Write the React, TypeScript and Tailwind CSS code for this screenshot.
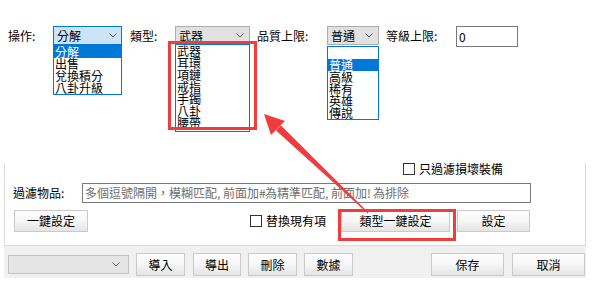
import React from "react";

function Chevron() {
  return (
    <svg width="8" height="5" viewBox="0 0 8 5" className="shrink-0">
      <polyline points="0.5,0.5 4,4 7.5,0.5" fill="none" stroke="#5a5a5a" strokeWidth="1" />
    </svg>
  );
}

function Btn({ cls, children }: { cls: string; children: React.ReactNode }) {
  return (
    <div
      className={
        "flex items-center justify-center border border-[#cacaca] bg-linear-to-b from-[#fefefe] via-[#f6f6f6] to-[#e4e4e4] text-black " +
        cls
      }
    >
      {children}
    </div>
  );
}

function Check() {
  return <div className="w-[12px] h-[12px] border border-[#333333] bg-white shrink-0" />;
}

function Item({ children, sel }: { children?: React.ReactNode; sel?: boolean }) {
  return (
    <div
      className={
        sel
          ? "h-[12px] leading-[12px] pl-[1px] bg-[#0078d7] text-white whitespace-nowrap"
          : "h-[12px] leading-[12px] pl-[1px] text-black whitespace-nowrap"
      }
    >
      {children}
    </div>
  );
}

function A({ c }: { c: string }) {
  return <span className="inline-block w-[6px]">{c}</span>;
}

export default function App() {
  return (
    <div className="relative w-[598px] h-[285px] bg-white overflow-hidden text-[12px] leading-[14px] text-black font-['Noto_Sans_CJK_TC','Noto_Sans_CJK_SC',sans-serif]">
      {/* top row */}
      <div className="flex items-start h-[20px] mt-[26px]">
        <div className="ml-[8px] w-[45px] h-[19px] flex items-center">操作:</div>
        <div className="relative w-[69px] h-[19px]">
          <div className="h-[19px] flex items-center justify-between pl-[3px] pr-[4px] bg-[#cce4f7] border border-[#0078d7]">
            <span>分解</span>
            <Chevron />
          </div>
          <div className="absolute left-0 top-[19px] w-[69px] h-[50px] border border-[#0078d7] bg-white z-10">
            <Item sel>分解</Item>
            <Item>出售</Item>
            <Item>兌換積分</Item>
            <Item>八卦升級</Item>
          </div>
        </div>

        <div className="ml-[8px] w-[45px] h-[19px] flex items-center">類型:</div>
        <div className="relative w-[75px] h-[19px]">
          <div className="h-[19px] flex items-center justify-between pl-[3px] pr-[5px] bg-[#e1e1e1] border border-[#adadad]">
            <span>武器</span>
            <Chevron />
          </div>
          <div className="absolute left-0 top-[18px] w-[75px] h-[88px] border border-[#0078d7] bg-white overflow-hidden z-10">
            <Item>武器</Item>
            <Item>耳環</Item>
            <Item>項鏈</Item>
            <Item>戒指</Item>
            <Item>手鐲</Item>
            <Item>八卦</Item>
            <Item>腰帶</Item>
          </div>
        </div>

        <div className="ml-[7px] w-[70px] h-[19px] flex items-center">品質上限:</div>
        <div className="relative w-[52px] h-[19px]">
          <div className="h-[19px] flex items-center justify-between pl-[3px] pr-[5px] bg-[#e1e1e1] border border-[#adadad]">
            <span>普通</span>
            <Chevron />
          </div>
          <div className="absolute left-0 top-[20px] w-[52px] h-[74px] border border-[#0078d7] bg-white z-10">
            <Item />
            <Item sel>普通</Item>
            <Item>高級</Item>
            <Item>稀有</Item>
            <Item>英雄</Item>
            <Item>傳說</Item>
          </div>
        </div>

        <div className="ml-[7px] w-[70px] h-[19px] flex items-center">等級上限:</div>
        <div className="w-[62px] h-[21px] border border-[#7a7a7a] bg-white flex items-center pl-[2px]">0</div>
      </div>

      {/* group panel */}
      <div className="ml-[4px] mt-[117px] w-[582px] h-[83px] border-x border-b border-[#dadada] bg-white">
        <div className="mt-[4px] h-[12px] flex items-center pl-[398px]">
          <Check />
          <span className="ml-[4px] whitespace-nowrap">只過濾損壞裝備</span>
        </div>
        <div className="mt-[8px] h-[20px] flex items-center">
          <div className="ml-[8px] w-[69px]">過濾物品:</div>
          <div className="w-[449px] h-[20px] border border-[#7a7a7a] flex items-center pl-[2px] text-[#6d6d6d] whitespace-nowrap overflow-hidden">
            <span>
              多個逗號隔開，模糊匹配<A c="," />前面加<A c="#" />為精準匹配<A c="," />前面加<A c="!" />為排除
            </span>
          </div>
        </div>
        <div className="mt-[7px] h-[22px] flex items-center">
          <Btn cls="ml-[9px] w-[74px] h-[22px]">一鍵設定</Btn>
          <div className="ml-[162px] w-[76px] flex items-center">
            <Check />
            <span className="ml-[4px] whitespace-nowrap">替換現有項</span>
          </div>
          <Btn cls="ml-[15px] w-[109px] h-[22px]">類型一鍵設定</Btn>
          <Btn cls="ml-[7px] w-[73px] h-[22px]">設定</Btn>
        </div>
      </div>

      {/* bottom bar */}
      <div className="ml-[4px] w-[582px] h-[32px] bg-[#f0f0f0] flex items-start pt-[7px] pl-[4px]">
        <div className="mt-[2px] w-[121px] h-[19px] bg-[#e5e5e5] border border-[#c3c3c3] flex items-center justify-end pr-[8px]">
          <Chevron />
        </div>
        <Btn cls="ml-[7px] w-[49px] h-[23px]">導入</Btn>
        <Btn cls="ml-[8px] w-[48px] h-[23px]">導出</Btn>
        <Btn cls="ml-[7px] w-[49px] h-[23px]">刪除</Btn>
        <Btn cls="ml-[7px] w-[49px] h-[23px]">數據</Btn>
        <Btn cls="ml-[78px] w-[73px] h-[23px]">保存</Btn>
        <Btn cls="ml-[8px] w-[73px] h-[23px]">取消</Btn>
      </div>

      {/* annotation overlays */}
      <div className="absolute left-[168px] top-[41px] w-[89px] h-[89px] border-[3px] border-[#f03c3c] z-20 pointer-events-none" />
      <div className="absolute left-[338px] top-[209px] w-[118px] h-[32px] border-[3px] border-[#f03c3c] z-20 pointer-events-none" />
      <svg className="absolute left-0 top-0 z-20 pointer-events-none" width="598" height="285" viewBox="0 0 598 285">
        <polygon
          points="281,125.5 276,130.5 367.8,213.4 368.4,212.6"
          fill="#f03c3c"
        />
        <polygon points="264,114 285,121 271,135" fill="#f03c3c" />
      </svg>
    </div>
  );
}
